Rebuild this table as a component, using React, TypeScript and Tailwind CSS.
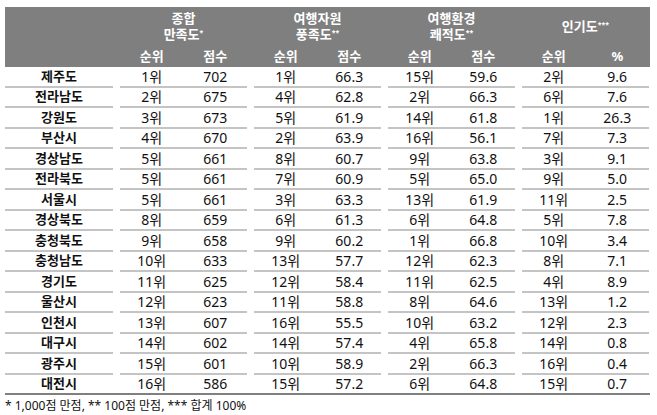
import React from 'react';

type Row = { name: string; vals: [string, string, string, string, string, string, string, string] };

const rows: Row[] = [
  { name: '제주도', vals: ['1위', '702', '1위', '66.3', '15위', '59.6', '2위', '9.6'] },
  { name: '전라남도', vals: ['2위', '675', '4위', '62.8', '2위', '66.3', '6위', '7.6'] },
  { name: '강원도', vals: ['3위', '673', '5위', '61.9', '14위', '61.8', '1위', '26.3'] },
  { name: '부산시', vals: ['4위', '670', '2위', '63.9', '16위', '56.1', '7위', '7.3'] },
  { name: '경상남도', vals: ['5위', '661', '8위', '60.7', '9위', '63.8', '3위', '9.1'] },
  { name: '전라북도', vals: ['5위', '661', '7위', '60.9', '5위', '65.0', '9위', '5.0'] },
  { name: '서울시', vals: ['5위', '661', '3위', '63.3', '13위', '61.9', '11위', '2.5'] },
  { name: '경상북도', vals: ['8위', '659', '6위', '61.3', '6위', '64.8', '5위', '7.8'] },
  { name: '충청북도', vals: ['9위', '658', '9위', '60.2', '1위', '66.8', '10위', '3.4'] },
  { name: '충청남도', vals: ['10위', '633', '13위', '57.7', '12위', '62.3', '8위', '7.1'] },
  { name: '경기도', vals: ['11위', '625', '12위', '58.4', '11위', '62.5', '4위', '8.9'] },
  { name: '울산시', vals: ['12위', '623', '11위', '58.8', '8위', '64.6', '13위', '1.2'] },
  { name: '인천시', vals: ['13위', '607', '16위', '55.5', '10위', '63.2', '12위', '2.3'] },
  { name: '대구시', vals: ['14위', '602', '14위', '57.4', '4위', '65.8', '14위', '0.8'] },
  { name: '광주시', vals: ['15위', '601', '10위', '58.9', '2위', '66.3', '16위', '0.4'] },
  { name: '대전시', vals: ['16위', '586', '15위', '57.2', '6위', '64.8', '15위', '0.7'] },
];

const groups: { lines: string[]; mark: string; sub: [string, string] }[] = [
  { lines: ['종합', '만족도'], mark: '*', sub: ['순위', '점수'] },
  { lines: ['여행자원', '풍족도'], mark: '**', sub: ['순위', '점수'] },
  { lines: ['여행환경', '쾌적도'], mark: '**', sub: ['순위', '점수'] },
  { lines: ['인기도'], mark: '***', sub: ['순위', '%'] },
];

const font = { fontFamily: '"Noto Sans", "Noto Sans CJK KR", sans-serif' };

export default function App() {
  return (
    <div className="w-[657px] h-[415px] bg-white text-[#111]" style={font}>
      <div className="ml-[5px] pt-[7px] w-[645px]">
        {/* header */}
        <div className="flex gap-[7px] bg-[#7f7f7f] text-white font-bold text-[13px]">
          <div className="w-[108px]" />
          {groups.map((g, i) => (
            <div key={i} className="w-[127px] flex flex-col">
              <div className="h-[40px] flex flex-col items-center justify-center leading-[16px] pb-[3px]">
                {g.lines.map((l, j) => (
                  <div key={j} className="whitespace-nowrap">
                    {j === g.lines.length - 1 ? (
                      <span>
                        {l}
                        <sup className="text-[7px] leading-none">{g.mark}</sup>
                      </span>
                    ) : (
                      l
                    )}
                  </div>
                ))}
              </div>
              <div className="h-[20px] flex items-center">
                <div className="flex-1 text-center">{g.sub[0]}</div>
                <div className="flex-1 text-center">{g.sub[1]}</div>
              </div>
            </div>
          ))}
        </div>

        {/* body */}
        {rows.map((r, idx) => {
          const last = idx === rows.length - 1;
          return (
            <div
              key={r.name}
              className={`flex gap-[7px] h-[20.5px] ${last ? 'border-b-2 border-[#808080]' : ''}`}
            >
              <div
                className={`w-[108px] flex items-center justify-center font-bold text-[13px] ${last ? '' : 'border-b-2 border-[#c4c4c4]'}`}
              >
                {r.name}
              </div>
              {[0, 1, 2, 3].map((g) => (
                <div
                  key={g}
                  className={`w-[127px] flex items-center text-[14px] ${last ? '' : 'border-b-2 border-[#c4c4c4]'}`}
                >
                  <div className="flex-1 text-center">{r.vals[g * 2]}</div>
                  <div className="flex-1 text-center">{r.vals[g * 2 + 1]}</div>
                </div>
              ))}
            </div>
          );
        })}

        <div className="text-[12px] mt-[3px] leading-[16px]">* 1,000점 만점, ** 100점 만점, *** 합계 100%</div>
      </div>
    </div>
  );
}
